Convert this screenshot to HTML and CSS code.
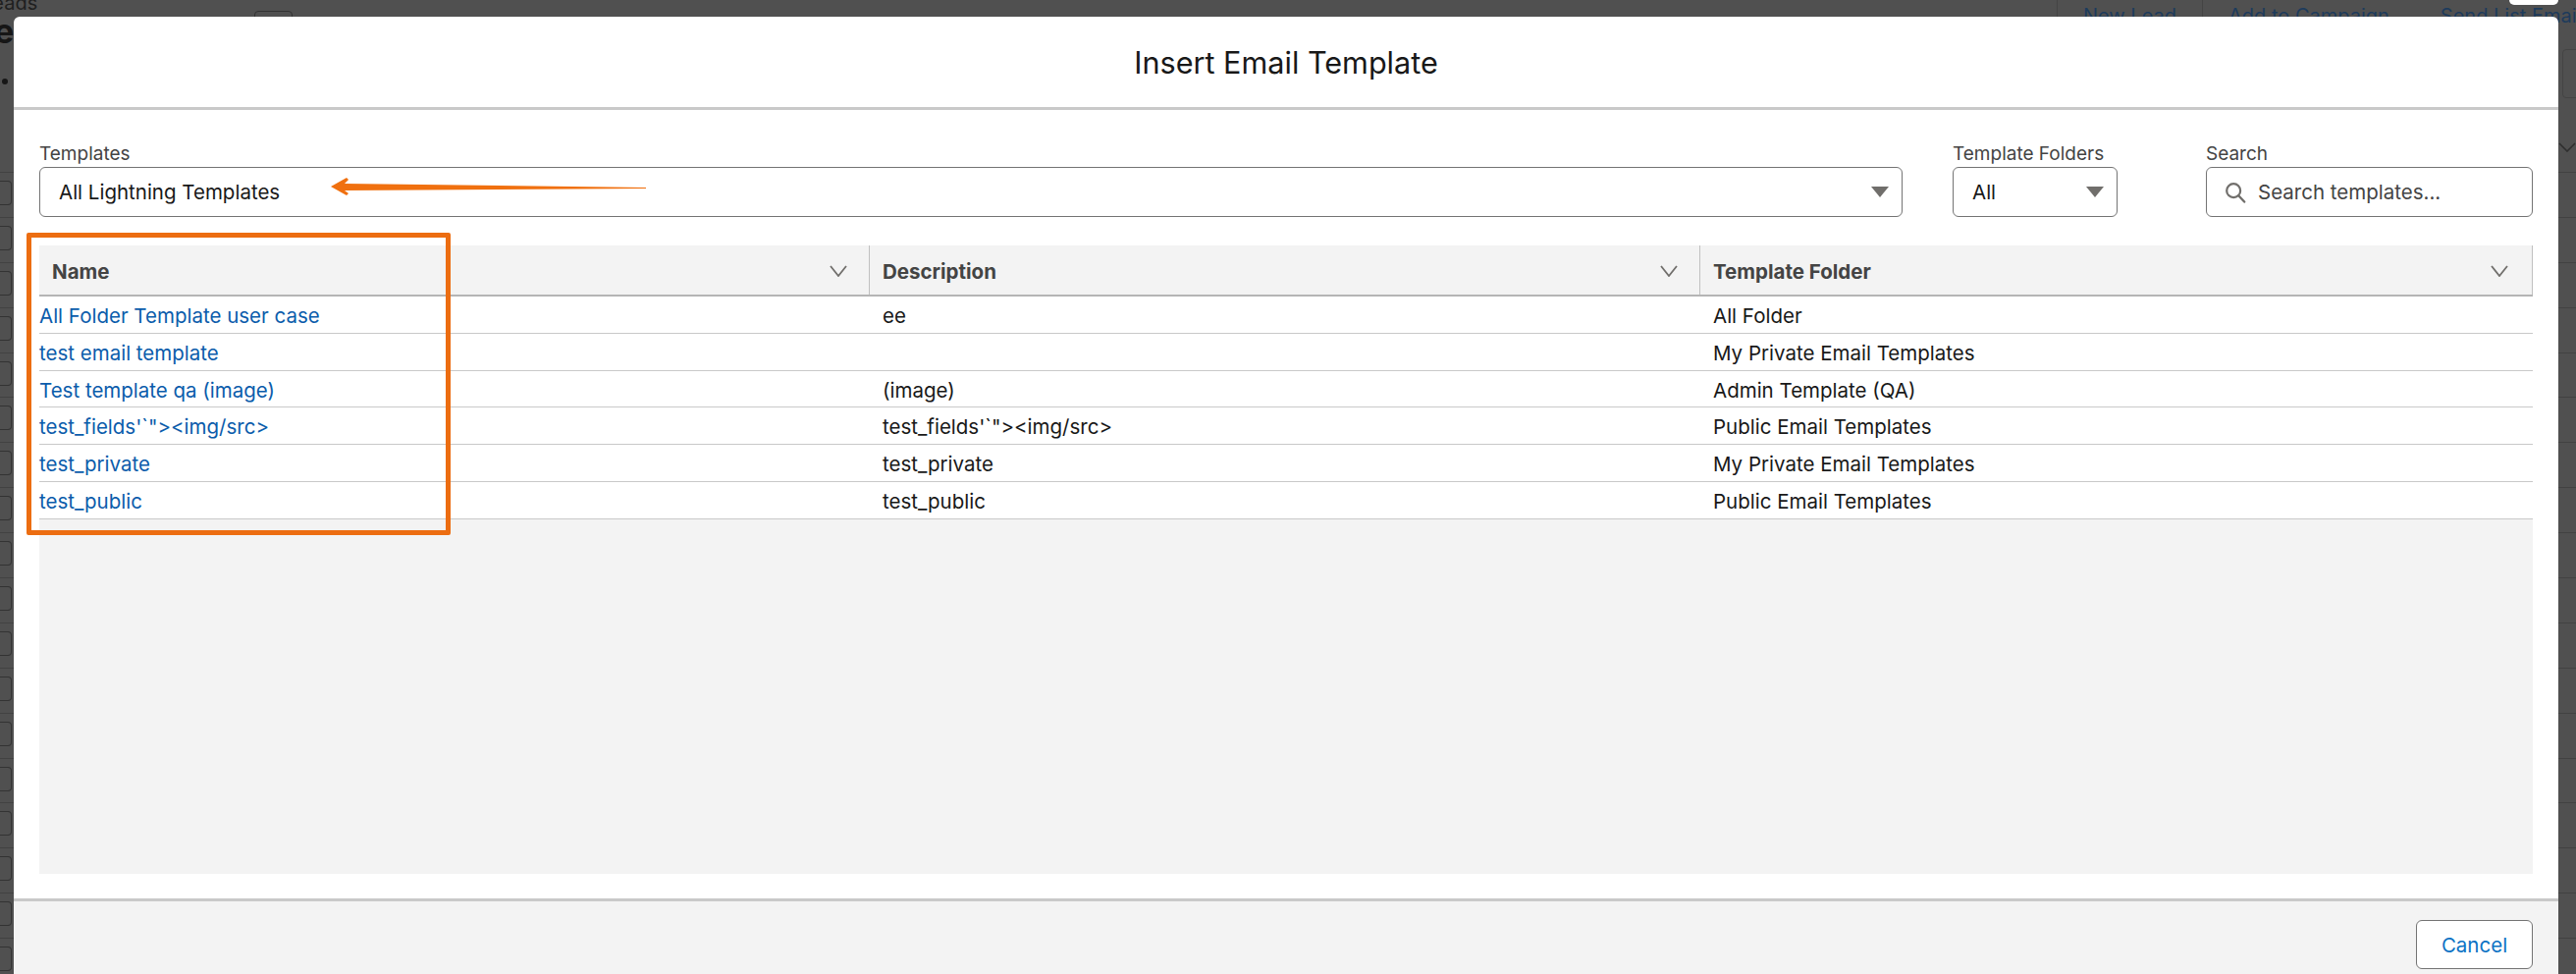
FILE: index.html
```html
<!DOCTYPE html>
<html lang="en">
<head>
<meta charset="utf-8">
<title>Insert Email Template</title>
<link rel="stylesheet" href="styles.css">
</head>
<body>
<div class="behind">
  <div class="behind-top">
    <div class="crumb">Leads</div>
    <div class="heading">e</div>
    <div class="dot"></div>
    <div class="view-btn"></div>
    <div class="actions">
      <span class="action">New Lead</span>
      <span class="action">Add to Campaign</span>
      <span class="action action-last">Send List Email</span>
    </div>
    <div class="tab-white"></div>
    <div class="side-box"></div>
    <svg class="side-chevron" viewBox="0 0 18 10"><path d="M1 1l8 8 8-8" fill="none" stroke="#2e2e2e" stroke-width="1.6"/></svg>
  </div>
  <div class="behind-rows">
    <div class="b-row"><span class="b-check"></span></div>
    <div class="b-row"><span class="b-check"></span></div>
    <div class="b-row"><span class="b-check"></span></div>
    <div class="b-row"><span class="b-check"></span></div>
    <div class="b-row"><span class="b-check"></span></div>
    <div class="b-row"><span class="b-check"></span></div>
    <div class="b-row"><span class="b-check"></span></div>
    <div class="b-row"><span class="b-check"></span></div>
    <div class="b-row"><span class="b-check"></span></div>
    <div class="b-row"><span class="b-check"></span></div>
    <div class="b-row"><span class="b-check"></span></div>
    <div class="b-row"><span class="b-check"></span></div>
    <div class="b-row"><span class="b-check"></span></div>
    <div class="b-row"><span class="b-check"></span></div>
    <div class="b-row"><span class="b-check"></span></div>
    <div class="b-row"><span class="b-check"></span></div>
    <div class="b-row"><span class="b-check"></span></div>
    <div class="b-row"><span class="b-check"></span></div>
  </div>
</div>

<section class="modal">
  <header class="modal-head"><h1 class="modal-title">Insert Email Template</h1></header>
  <div class="modal-body">
    <div class="filters">
      <div class="field field-templates">
        <label class="field-label">Templates</label>
        <div class="control select"><span>All Lightning Templates</span><i class="caret"></i></div>
      </div>
      <div class="field field-folders">
        <label class="field-label">Template Folders</label>
        <div class="control select"><span>All</span><i class="caret"></i></div>
      </div>
      <div class="field field-search">
        <label class="field-label">Search</label>
        <div class="control search">
          <svg class="search-icon" viewBox="0 0 24 24"><circle cx="10" cy="10" r="7.6" fill="none" stroke="#706e6b" stroke-width="2.4"/><path d="M15.6 15.6l6.4 6.8" fill="none" stroke="#706e6b" stroke-width="2.6" stroke-linecap="round"/></svg>
          <span class="placeholder">Search templates...</span>
        </div>
      </div>
    </div>
    <div class="table">
      <div class="thead">
        <div class="th th-first"><span>Name</span><svg class="chev" viewBox="0 0 18 12"><path d="M1 1l8 10 8-10" fill="none" stroke="#706e6b" stroke-width="1.8"/></svg></div>
        <div class="th"><span>Description</span><svg class="chev" viewBox="0 0 18 12"><path d="M1 1l8 10 8-10" fill="none" stroke="#706e6b" stroke-width="1.8"/></svg></div>
        <div class="th th-last"><span>Template Folder</span><svg class="chev" viewBox="0 0 18 12"><path d="M1 1l8 10 8-10" fill="none" stroke="#706e6b" stroke-width="1.8"/></svg></div>
      </div>
      <div class="tr"><a class="td link">All Folder Template user case</a><div class="td">ee</div><div class="td">All Folder</div></div>
      <div class="tr"><a class="td link">test email template</a><div class="td"></div><div class="td">My Private Email Templates</div></div>
      <div class="tr"><a class="td link">Test template qa (image)</a><div class="td">(image)</div><div class="td">Admin Template (QA)</div></div>
      <div class="tr"><a class="td link">test_fields'`"&gt;&lt;img/src&gt;</a><div class="td">test_fields'`"&gt;&lt;img/src&gt;</div><div class="td">Public Email Templates</div></div>
      <div class="tr"><a class="td link">test_private</a><div class="td">test_private</div><div class="td">My Private Email Templates</div></div>
      <div class="tr"><a class="td link">test_public</a><div class="td">test_public</div><div class="td">Public Email Templates</div></div>
    </div>
  </div>
  <footer class="modal-foot"><button class="btn-cancel" type="button">Cancel</button></footer>
</section>

<div class="mark-box"></div>
<svg class="mark-arrow" viewBox="0 0 324 20"><path d="M1 10 L17 1 L19 3 L15 7 L322 11 L322 12 L15 14 L19 17 L17 19 Z" fill="#f0700f"/></svg>
</body>
</html>
```

FILE: styles.css
```css
* { box-sizing: border-box; }
html, body { margin: 0; height: 100%; }
body {
  position: relative;
  width: 2624px;
  height: 992px;
  overflow: hidden;
  background: #505050;
  font-family: Inter, "Liberation Sans", Arial, sans-serif;
  font-size: 20.5px;
  color: #181818;
}

/* dimmed page behind the modal */
.behind { position: absolute; inset: 0; }
.behind-top { position: relative; height: 176px; border-bottom: 1px solid #424242; }
.crumb { position: absolute; left: -19px; top: -9px; font-size: 20px; color: #1f1f1f; }
.heading { position: absolute; left: -6px; top: 15px; font-size: 34px; font-weight: 700; line-height: 34px; color: #161616; }
.dot { position: absolute; left: 2px; top: 80px; width: 6px; height: 6px; border-radius: 50%; background: #161616; }
.view-btn { position: absolute; left: 259px; top: 11px; width: 39px; height: 20px; border: 1px solid #333; border-radius: 4px; }
.actions { position: absolute; left: 2095px; top: 0; height: 17px; display: flex; color: #1d3b5c; font-size: 20px; }
.action { padding: 4px 26px 0 26px; border-left: 1px solid #444; white-space: nowrap; line-height: 24px; }
.action-last { border-left: 0; padding-left: 26px; }
.tab-white { position: absolute; left: 2556px; top: 0; width: 50px; height: 5px; background: #fff; border-radius: 0 0 5px 5px; }
.side-box { position: absolute; left: 2610px; top: 50px; width: 40px; height: 50px; border: 1px solid #444; border-radius: 4px; }
.side-chevron { position: absolute; left: 2606px; top: 145px; width: 18px; height: 10px; }
.behind-rows { display: flex; flex-direction: column; }
.b-row { height: 45.9px; flex: none; border-bottom: 1px solid #424242; display: flex; align-items: center; }
.b-check { width: 12px; height: 25px; margin-top: -4px; border: 1px solid #333; border-left: 0; border-radius: 0 4px 4px 0; }

/* modal */
.modal {
  position: absolute;
  left: 14px;
  right: 18px;
  top: 17px;
  bottom: 0;
  display: flex;
  flex-direction: column;
  background: #fff;
  border-radius: 6px 6px 0 0;
}
.modal-head {
  flex: none;
  height: 95px;
  padding-top: 1px;
  border-bottom: 3px solid #c9c9c9;
  display: flex;
  align-items: center;
  justify-content: center;
}
.modal-title { margin: 0; font-size: 30.6px; font-weight: 400; color: #181818; line-height: 40px; }
.modal-body {
  flex: 1;
  min-height: 0;
  display: flex;
  flex-direction: column;
  padding: 31px 26px 25px;
}
.filters { flex: none; display: flex; height: 78px; }
.field { display: flex; flex-direction: column; }
.field-templates { flex: 1; min-width: 0; }
.field-folders { flex: none; width: 168px; margin-left: 51px; }
.field-search { flex: none; width: 333px; margin-left: 90px; }
.field-label { height: 27px; line-height: 27px; font-size: 19px; color: #444; white-space: nowrap; }
.control {
  height: 51px;
  border: 1.5px solid #747474;
  border-radius: 6px;
  display: flex;
  align-items: center;
  background: #fff;
}
.select { justify-content: space-between; padding: 0 13px 0 19px; }
.caret {
  flex: none;
  width: 0;
  height: 0;
  border-left: 9px solid transparent;
  border-right: 9px solid transparent;
  border-top: 11px solid #706e6b;
}
.search { padding: 0 0 0 18px; gap: 12px; }
.search-icon { width: 22px; height: 22px; flex: none; }
.placeholder { color: #444; }

.table {
  flex: 1;
  min-height: 0;
  margin-top: 29px;
  background: #f3f3f3;
  display: flex;
  flex-direction: column;
}
.thead, .tr { display: grid; grid-template-columns: 845px 846px 1fr; flex: none; }
.thead { height: 52px; border-bottom: 2px solid #b5b5b5; }
.th {
  display: flex;
  align-items: center;
  justify-content: space-between;
  padding: 2px 22px 0 13px;
  font-weight: 700;
  color: #444;
  border-left: 1px solid #c0c0c0;
}
.th-first { border-left: 0; padding-left: 13px; }
.th-last { border-right: 1px solid #c0c0c0; padding-right: 24px; }
.chev { width: 18px; height: 12px; flex: none; }
.tr { height: 37.83px; padding-top: 2px; background: #fff; border-bottom: 1.5px solid #c9c9c9; align-items: center; }
.td { padding-left: 14px; white-space: nowrap; }
.link { padding-left: 0; color: #0b5cab; text-decoration: none; }

.modal-foot {
  flex: none;
  height: 77px;
  border-top: 3px solid #c9c9c9;
  background: #f3f3f3;
  display: flex;
  justify-content: flex-end;
  align-items: flex-start;
  padding: 19px 26px 0 0;
}
.btn-cancel {
  width: 119px;
  height: 50px;
  border: 1.5px solid #747474;
  border-radius: 6px;
  background: #fff;
  color: #0b72c4;
  font: inherit;
  padding: 0;
}

/* annotation drawn over the screenshot */
.mark-box {
  position: absolute;
  left: 27px;
  top: 237px;
  width: 432px;
  height: 308px;
  border: 5px solid #ec6d11;
  border-radius: 2px;
}
.mark-arrow { position: absolute; left: 336px; top: 180px; width: 324px; height: 20px; }
```
